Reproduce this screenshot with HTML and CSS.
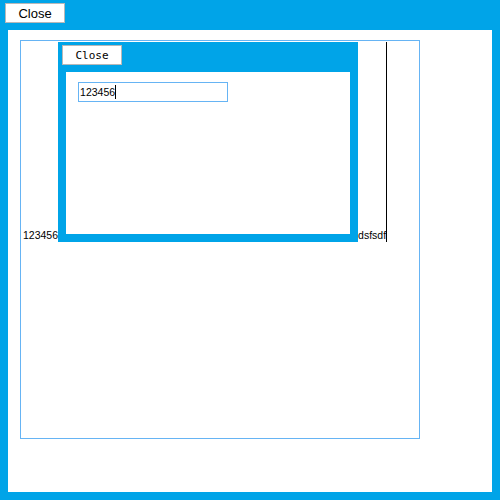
FILE: index.html
```html
<!DOCTYPE html>
<html lang="en">

<head>
    <meta charset="UTF-8" />
    <title>Dialog</title>
    <link rel="stylesheet" href="styles.css">
</head>

<body>
    <div class="topbar">
        <button class="btn">Close</button>
    </div>

    <div class="panel">
        <div class="frame">
            <span class="word">123456</span><div class="dialog">
                <div class="dialog-head">
                    <button class="btn small">Close</button>
                </div>
                <div class="dialog-body">
                    <div class="field">123456<span class="caret"></span></div>
                </div>
            </div><span class="word">dsfsdf</span><span class="line-caret"></span>
        </div>
    </div>
</body>

</html>
```
FILE: styles.css
```css
html,
body {
    margin: 0;
    height: 100%;
    background: #00a4e8;
    font-family: 'Liberation Sans', Arial, sans-serif;
}

.topbar {
    height: 30px;
    padding: 3px 0 0 5px;
    box-sizing: border-box;
}

.btn {
    display: block;
    width: 60px;
    height: 20px;
    margin: 0;
    padding: 0;
    background: #fff;
    border: 1px solid #b8b8b8;
    font-family: 'Liberation Sans', Arial, sans-serif;
    font-size: 13px;
    color: #000;
}

.btn.small {
    font-family: 'DejaVu Sans Mono', 'Liberation Mono', monospace;
    font-size: 11px;
}

.panel {
    height: 462px;
    margin: 0 8px;
    background: #fff;
    padding: 10px 0 0 12px;
    box-sizing: border-box;
}

.frame {
    width: 400px;
    height: 399px;
    box-sizing: border-box;
    border: 1px solid #66b4f4;
    padding: 1px 0 0 2px;
    font-size: 10.5px;
    line-height: 14px;
    color: #000;
}

.dialog {
    display: inline-block;
    vertical-align: bottom;
    width: 300px;
    height: 200px;
    background: #00a4e8;
    overflow: hidden;
}

.dialog-head {
    height: 30px;
    padding: 3px 0 0 4px;
    box-sizing: border-box;
}

.dialog-body {
    height: 162px;
    margin: 0 8px;
    background: #fff;
    padding: 10px 0 0 12px;
    box-sizing: border-box;
}

.field {
    width: 150px;
    height: 20px;
    box-sizing: border-box;
    border: 1px solid #66b4f4;
    padding: 2px 0 0 1px;
    font-size: 10.5px;
    line-height: 15px;
}

.caret {
    display: inline-block;
    width: 0;
    height: 14px;
    border-left: 1px solid #000;
    vertical-align: -3px;
}

.line-caret {
    display: inline-block;
    vertical-align: bottom;
    width: 0;
    height: 200px;
    border-left: 1px solid #000;
}
```
